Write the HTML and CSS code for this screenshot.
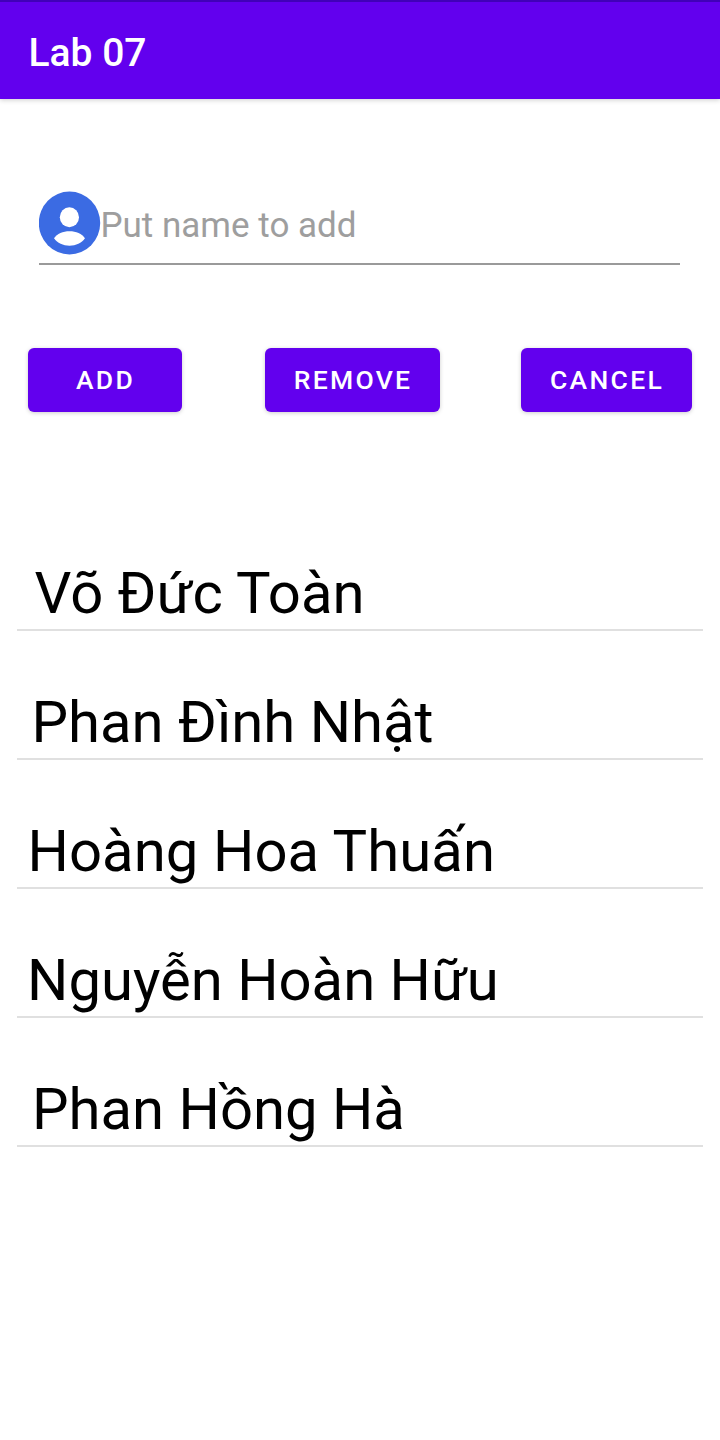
FILE: index.html
```html
<!DOCTYPE html>
<html lang="vi">
<head>
<meta charset="utf-8">
<title>Lab 07</title>
<link rel="stylesheet" href="styles.css">
</head>
<body>
<header class="app-bar"><h1 class="title">Lab 07</h1></header>
<main>
<div class="name-field">
<svg class="avatar" viewBox="0 0 62 64"><ellipse cx="30.5" cy="32" rx="30.7" ry="31.5" fill="#3b6be3"/><ellipse cx="30.4" cy="26.3" rx="9.6" ry="10" fill="#fff"/><path d="M15 47.3C18 42.5 24 40.2 30.5 40.2S43 42.5 46 47.3C42.5 52 37 54.7 30.5 54.7S18.5 52 15 47.3Z" fill="#fff"/></svg>
<span class="placeholder">Put name to add</span>
</div>
<div class="actions">
<button class="btn add">ADD</button>
<button class="btn remove">REMOVE</button>
<button class="btn cancel">CANCEL</button>
</div>
<ul class="names">
<li class="row r1"><span>Võ Đức Toàn</span></li>
<li class="row r2"><span>Phan Đình Nhật</span></li>
<li class="row r3"><span>Hoàng Hoa Thuấn</span></li>
<li class="row r4"><span>Nguyễn Hoàn Hữu</span></li>
<li class="row r5"><span>Phan Hồng Hà</span></li>
</ul>
</main>
</body>
</html>
```
FILE: styles.css
```css
* { box-sizing: border-box; }
body { margin: 0; background: #fff; font-family: Roboto, "Noto Sans", sans-serif; height: 1440px; overflow: hidden; }
.app-bar { height: 99px; background: #6200ee; border-top: 2px solid #4100b9; padding: 27px 0 0 28.5px; box-shadow: 0 1px 5px rgba(0,0,0,.2); }
.title { margin: 0; color: #fff; font-size: 39px; line-height: 48px; font-weight: 500; }
.name-field { display: flex; margin: 92px 40px 0 39px; height: 74px; border-bottom: 2px solid #9a9a9a; }
.avatar { width: 62px; height: 64px; flex: none; }
.placeholder { font-size: 35px; line-height: 44px; margin-left: -.5px; padding-top: 13px; color: #9e9e9e; white-space: nowrap; }
.actions { display: flex; margin: 83px 28px 0; }
.btn { height: 64px; border: 0; border-radius: 6px; padding: 0 0 1px 1px; background: #6200ee; color: #fff; font: 500 26.5px/32px Roboto, sans-serif; letter-spacing: 2.3px; box-shadow: 0 1px 4px rgba(0,0,0,.2); }
.add { width: 154px; }
.remove { width: 175px; margin-left: 83px; }
.cancel { width: 171px; margin-left: 81px; }
.names { list-style: none; margin: 90px 17px 0; padding: 0; }
.row { height: 129px; border-bottom: 2px solid #e0e0e0; padding: 57px 0 0 10px; font-size: 58px; line-height: 68px; color: #000; white-space: nowrap; }
.r1 { padding-left: 17.5px; }
.r2 { padding-left: 14.5px; }
.r3 { padding-left: 10.5px; letter-spacing: .08px; }
.r5 { padding-left: 15px; }
```
